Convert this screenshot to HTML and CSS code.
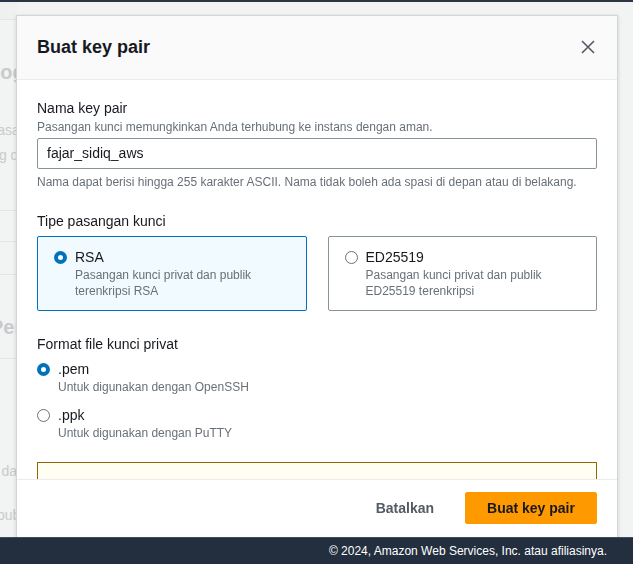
FILE: index.html
```html
<!DOCTYPE html>
<html lang="id">
<head>
<meta charset="utf-8">
<title>Buat key pair</title>
<link rel="stylesheet" href="styles.css">
</head>
<body>
<div class="topbar"></div>
<div class="backdrop">
  <div class="bg-strip"></div>
  <div class="bg-title">Login</div>
  <div class="bg-text bg-t1">Pasangan</div>
  <div class="bg-text bg-t2">ing data</div>
  <div class="bg-rule bg-r1"></div>
  <div class="bg-rule bg-r2"></div>
  <div class="bg-rule bg-r3"></div>
  <div class="bg-title bg-t3">Pengan</div>
  <div class="bg-rule bg-r4"></div>
  <div class="bg-text bg-t4">at data</div>
  <div class="bg-text bg-t5">publik</div>
</div>

<div class="modal" role="dialog">
  <div class="modal-header">
    <h2 class="modal-title">Buat key pair</h2>
    <button class="close-btn" aria-label="Tutup">
      <svg width="14" height="14" viewBox="0 0 14 14"><path d="M1 1 L13 13 M13 1 L1 13" stroke="#545b64" stroke-width="1.6" fill="none"/></svg>
    </button>
  </div>
  <div class="modal-body">
    <div class="field">
      <div class="label">Nama key pair</div>
      <div class="desc">Pasangan kunci memungkinkan Anda terhubung ke instans dengan aman.</div>
      <div class="input">fajar_sidiq_aws</div>
      <div class="help">Nama dapat berisi hingga 255 karakter ASCII. Nama tidak boleh ada spasi di depan atau di belakang.</div>
    </div>

    <div class="label section">Tipe pasangan kunci</div>
    <div class="cards">
      <div class="card selected">
        <div class="radio-row">
          <span class="radio checked"></span>
          <div>
            <div class="opt-label">RSA</div>
            <div class="desc">Pasangan kunci privat dan publik<br>terenkripsi RSA</div>
          </div>
        </div>
      </div>
      <div class="card">
        <div class="radio-row">
          <span class="radio"></span>
          <div>
            <div class="opt-label">ED25519</div>
            <div class="desc">Pasangan kunci privat dan publik<br>ED25519 terenkripsi</div>
          </div>
        </div>
      </div>
    </div>

    <div class="label section2">Format file kunci privat</div>
    <div class="radio-row first">
      <span class="radio checked"></span>
      <div>
        <div class="opt-label">.pem</div>
        <div class="desc">Untuk digunakan dengan OpenSSH</div>
      </div>
    </div>
    <div class="radio-row second">
      <span class="radio"></span>
      <div>
        <div class="opt-label">.ppk</div>
        <div class="desc">Untuk digunakan dengan PuTTY</div>
      </div>
    </div>

    <div class="alert"></div>
  </div>
  <div class="modal-footer">
    <button class="btn-link">Batalkan</button>
    <button class="btn-primary">Buat key pair</button>
  </div>
</div>

<div class="bottombar">© 2024, Amazon Web Services, Inc. atau afiliasinya.</div>
</body>
</html>
```

FILE: styles.css
```css
* { box-sizing: border-box; }
html, body {
  margin: 0;
  padding: 0;
  height: 100%;
  overflow: hidden;
}
body {
  background: #f2f3f3;
  font-family: "Liberation Sans", Arial, sans-serif;
  color: #16191f;
  font-size: 14px;
  line-height: 22px;
}
.topbar {
  height: 2px;
  background: #2a3442;
}
.backdrop {
  display: flex;
  flex-direction: column;
  color: #c8cbcc;
  width: 17px;
  overflow: hidden;
  white-space: nowrap;
}
.bg-strip {
  height: 18px;
  border-bottom: 1px solid #e3e6e6;
  background: #eff1f1;
}
.bg-title {
  font-weight: bold;
  font-size: 20px;
  line-height: 24px;
  margin-top: 40px;
  margin-left: -12px;
}
.bg-text {
  font-size: 14px;
  line-height: 20px;
  margin-left: -12px;
}
.bg-t1 { margin-top: 36px; }
.bg-t2 { margin-top: 5px; }
.bg-rule { height: 1px; background: #e3e6e6; }
.bg-r1 { margin-top: 45px; }
.bg-r2 { margin-top: 30px; }
.bg-r3 { margin-top: 32px; }
.bg-t3 { margin-top: 40px; margin-left: -10px; }
.bg-r4 { margin-top: 19px; }
.bg-t4 { margin-top: 102px; margin-left: -14px; }
.bg-t5 { margin-top: 24px; margin-left: -3px; }

.modal {
  position: fixed;
  top: 15px;
  left: 16px;
  width: 602px;
  height: 540px;
  background: #fff;
  border: 1px solid #d1d5d6;
  box-shadow: 0 1px 4px rgba(0,28,36,0.15);
  display: flex;
  flex-direction: column;
}
.modal-header {
  background: #fafafa;
  border-bottom: 1px solid #eaeded;
  padding: 20px 20px 21px 20px;
  display: flex;
  align-items: center;
  justify-content: space-between;
}
.modal-title {
  margin: 0;
  font-size: 18px;
  line-height: 22px;
  font-weight: bold;
  color: #16191f;
}
.close-btn {
  border: 0;
  background: none;
  padding: 0;
  margin-right: 2px;
  width: 14px;
  height: 14px;
  display: flex;
}
.modal-body {
  height: 399px;
  overflow: hidden;
  padding: 17px 20px 0 20px;
}
.label {
  font-size: 14px;
  line-height: 22px;
  color: #16191f;
}
.desc, .help {
  font-size: 12px;
  line-height: 16px;
  color: #687078;
}
.input {
  margin-top: 3px;
  height: 31px;
  border: 1px solid #879596;
  border-radius: 2px;
  padding: 3px 9px;
  font-size: 14px;
  line-height: 23px;
  color: #16191f;
}
.help { margin-top: 5px; }
.section { margin-top: 20px; }
.cards {
  margin-top: 4px;
  display: grid;
  grid-template-columns: 1fr 1fr;
  gap: 21px;
}
.card {
  height: 75px;
  border: 1px solid #879596;
  border-radius: 2px;
  padding: 10px 16px 11px 16px;
}
.card.selected {
  border-color: #0073bb;
  background: #f1faff;
}
.radio-row {
  display: flex;
  align-items: flex-start;
  gap: 8px;
}
.radio {
  flex: none;
  width: 13px;
  height: 13px;
  border-radius: 50%;
  border: 1.5px solid #687078;
  background: #fff;
  margin-top: 4px;
}
.radio.checked {
  border: 4px solid #0073bb;
}
.opt-label {
  font-size: 14px;
  line-height: 20px;
  color: #16191f;
}
.section2 { margin-top: 22px; }
.radio-row.first { margin-top: 4px; }
.radio-row.second { margin-top: 10px; }
.alert {
  margin-top: 21px;
  height: 60px;
  border: 1px solid #906806;
  background: #fffef0;
}
.modal-footer {
  border-top: 1px solid #eaeded;
  padding: 12px 20px;
  display: flex;
  justify-content: flex-end;
  gap: 10px;
}
.btn-link, .btn-primary {
  font-family: "Liberation Sans", Arial, sans-serif;
  font-size: 14px;
  font-weight: bold;
  line-height: 22px;
  height: 32px;
  padding: 4px 20px;
  border-radius: 2px;
  border: 1px solid transparent;
}
.btn-link {
  background: none;
  color: #545b64;
}
.btn-primary {
  background: #ff9900;
  border-color: #ff9900;
  color: #16191f;
  width: 132px;
}
.bottombar {
  position: fixed;
  left: 0;
  right: 0;
  bottom: 0;
  height: 27px;
  background: #232f3e;
  border-top: 1px solid #414d5c;
  color: #ffffff;
  font-size: 12px;
  line-height: 26px;
  text-align: right;
  padding-right: 26px;
}
```
